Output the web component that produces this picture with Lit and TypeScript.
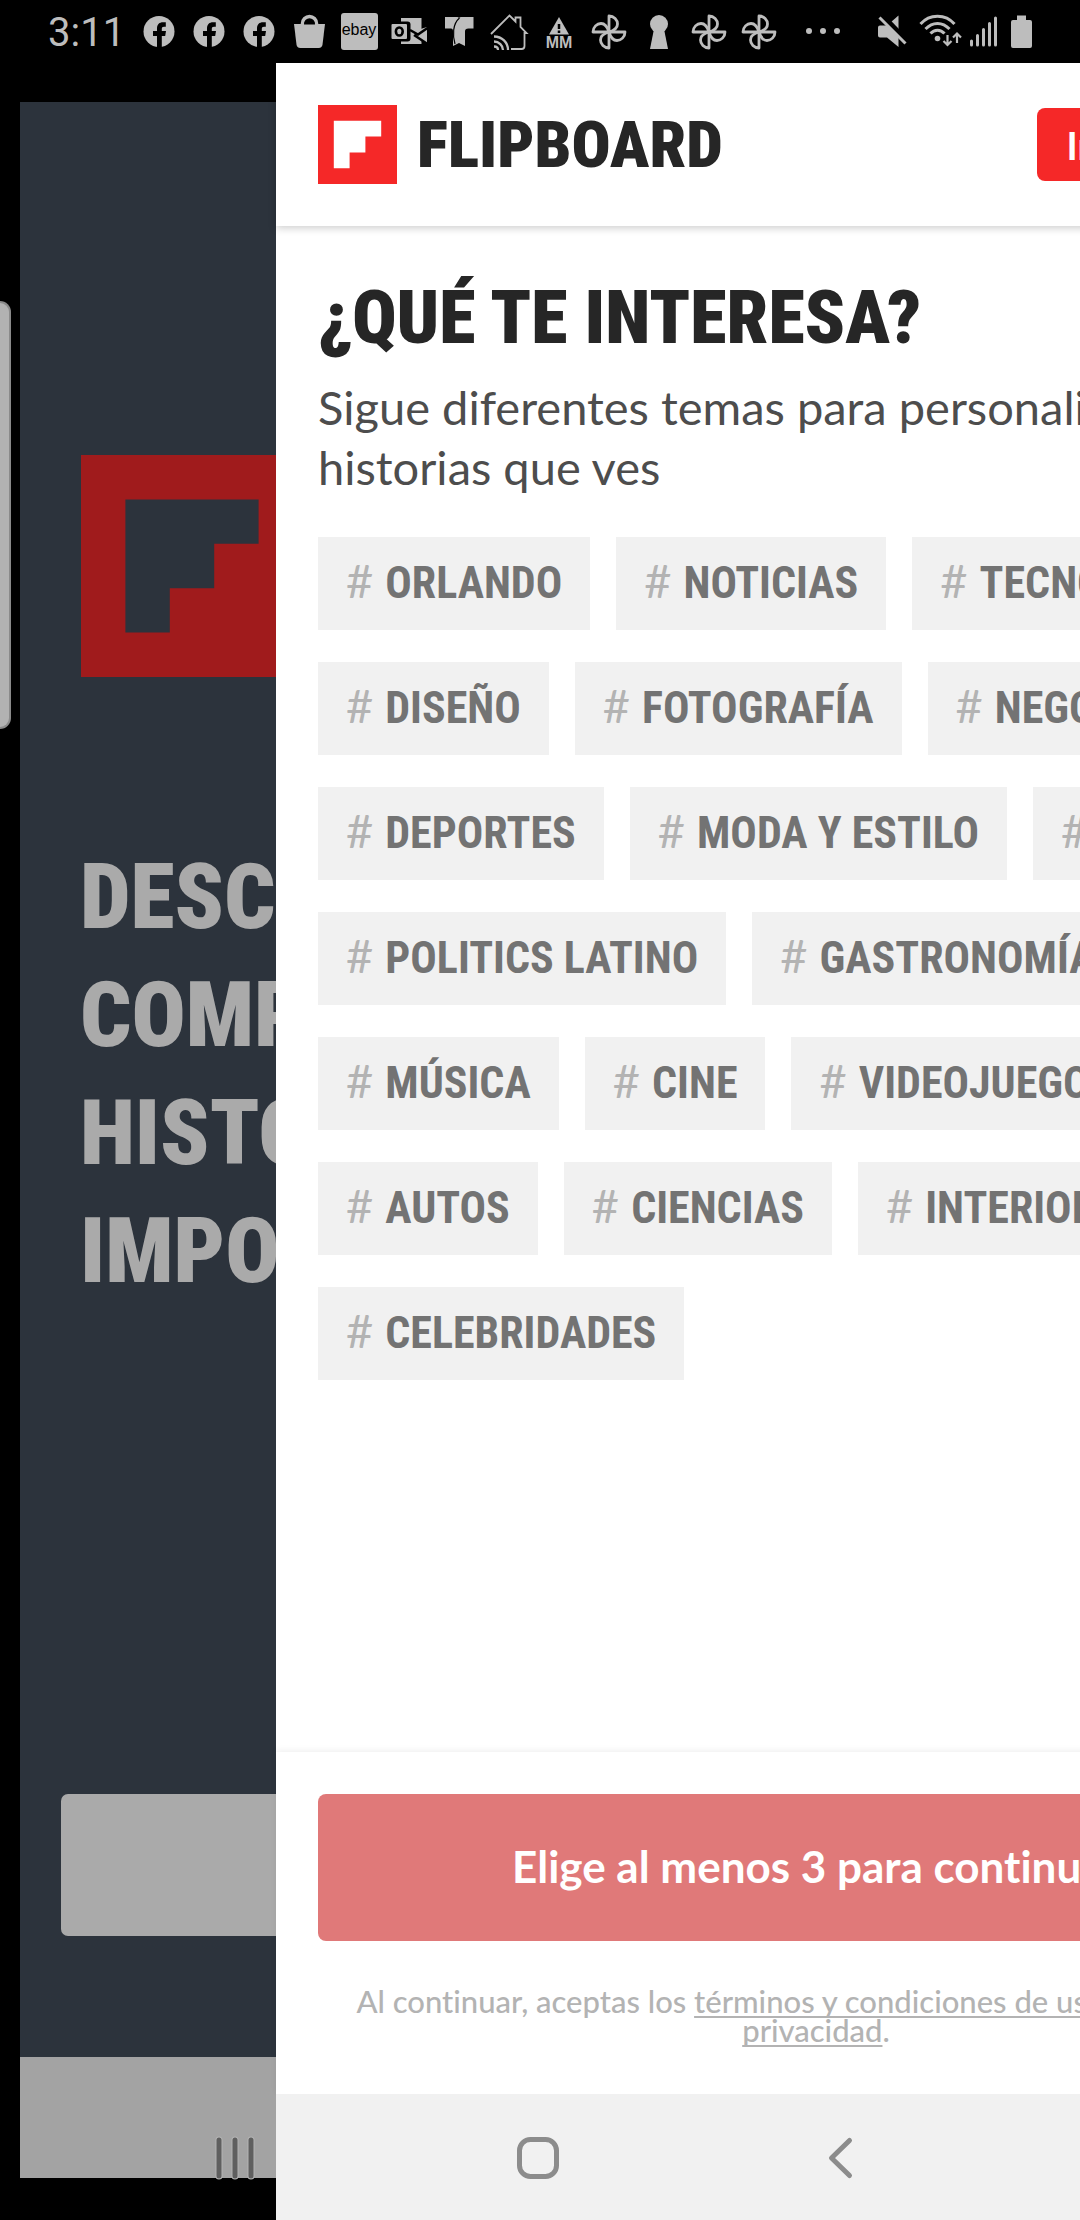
import { LitElement, html, css, svg } from "lit";
import { customElement, state } from "lit/decorators.js";
import { classMap } from "lit/directives/class-map.js";

const TOPICS = [
  "ORLANDO",
  "NOTICIAS",
  "TECNOLOGÍA",
  "DISEÑO",
  "FOTOGRAFÍA",
  "NEGOCIOS",
  "DEPORTES",
  "MODA Y ESTILO",
  "VIAJES",
  "POLITICS LATINO",
  "GASTRONOMÍA",
  "MÚSICA",
  "CINE",
  "VIDEOJUEGOS",
  "AUTOS",
  "CIENCIAS",
  "INTERIORES",
  "CELEBRIDADES",
];

const facebook = svg`
  <circle cx="25" cy="31.5" r="15.500" fill="currentColor" />
  <path d="M23 48V36h-4v-5h4v-2.500c0-4.300 2.500-6.300 6-6.300h2.800v4.500H30c-1.600 0-2.200.8-2.200 2.200V31h4.200l-.8 5h-3.400v12z" fill="#000" />`;

const bag = svg`
  <path d="M10 24h31l-2.500 20.500c-.3 2.300-1.500 3.500-3.800 3.500H16.300c-2.300 0-3.500-1.200-3.800-3.500z" fill="currentColor" />
  <path d="M18.500 26v-2.500a7 7 0 0 1 14 0V26" fill="none" stroke="currentColor" stroke-width="3.500" />
  <path d="M20 24.500a5.500 5.500 0 0 1 11 0z" fill="#000" />`;

const outlook = svg`
  <path d="M17 18h20.500v26H17z" fill="currentColor" />
  <path d="M43 27v16.500L24 33z" fill="currentColor" />
  <path d="M26 30l8 4.500 9.500-6.500M30 35l13.500 9" fill="none" stroke="#000" stroke-width="2.500" />
  <rect x="6" y="21.500" width="20.500" height="20" rx="3" fill="#000" />
  <rect x="7.500" y="24" width="15.500" height="15" rx="1" fill="currentColor" />
  <ellipse cx="15.300" cy="31.500" rx="3.400" ry="4" fill="none" stroke="#000" stroke-width="2.600" />`;

const telemundo = svg`
  <path d="M11 17h11.500c1.500 0 2.100.3 2.500 1 .4-.7 1.500-1 3-1h11.500v11.500h-5c-2.500 0-3.500 1-3.500 3V46l-6-3-6 3V31c0-1.500-.5-2.500-2-2.500h-6z" fill="currentColor" />
  <path d="M25.500 18c-7 6-7 17-4.500 26" fill="none" stroke="#000" stroke-width="1.200" />`;

const house = svg`
  <g fill="none" stroke="currentColor" stroke-width="1.800">
    <path d="M7 34L25.500 15.500 31.500 21.500V17.500H36.500V27L42.500 33H40.500V46c0 2-1 3-3 3H27" />
    <path d="M10 36.500c8 0 14 6 14 13.500M10 41.500c5 0 9 4 9 8.500M10 46.500c2.500 0 4 1.500 4 3.500" stroke-width="2.300" />
  </g>`;

const alert = svg`
  <path d="M25 17l10 17.500H15z" fill="currentColor" />
  <path d="M25 24v5M25 30.500v2.500" stroke="#000" stroke-width="2.500" />`;

const BLADE = "M25 32V16c5 0 8.500 4 8.500 8 0 3.500-3.500 6.500-8.500 8z";

const fan = svg`
  <g fill="none" stroke="currentColor" stroke-width="2.800" stroke-linejoin="round">
    <path d=${BLADE} />
    <path d=${BLADE} transform="rotate(90 25 32)" />
    <path d=${BLADE} transform="rotate(180 25 32)" />
    <path d=${BLADE} transform="rotate(270 25 32)" />
  </g>`;

const keyhole = svg`
  <circle cx="25" cy="24" r="9" fill="currentColor" />
  <path d="M20 29h10l4 20H16z" fill="currentColor" />`;

const cell = (art: unknown) =>
  html`<svg class="cell" viewBox="0 0 50 63" aria-hidden="true">${art}</svg>`;

@customElement("status-bar")
export class StatusBar extends LitElement {
  static styles = css`
    :host {
      display: flex;
      height: 63px;
      padding: 0 46px 0 48px;
      box-sizing: border-box;
      background: #000;
      color: #bdbdbd;
      font-family: Roboto, sans-serif;
      overflow: hidden;
    }
    .time {
      flex: none;
      width: 86px;
      font-size: 40px;
      line-height: 66px;
    }
    .cell {
      flex: none;
      width: 50px;
      height: 63px;
    }
    .labelled {
      display: grid;
      flex: none;
      width: 50px;
    }
    .labelled > * {
      grid-area: 1 / 1;
    }
    .tile {
      align-self: start;
      justify-self: center;
      margin-top: 13px;
      width: 37px;
      height: 37px;
      border-radius: 3px;
      background: #bdbdbd;
      color: #000;
      font: 16px/34px "Liberation Sans", sans-serif;
      text-align: center;
    }
    .mm {
      align-self: start;
      justify-self: center;
      margin-top: 35px;
      font: bold 16px/16px "Liberation Sans", sans-serif;
    }
    .dots {
      flex: none;
      width: 78px;
      height: 63px;
    }
    .system {
      flex: none;
      margin-left: auto;
      width: 158px;
      height: 63px;
    }
  `;

  render() {
    return html`
      <span class="time">3:11</span>
      ${cell(facebook)}${cell(facebook)}${cell(facebook)}${cell(bag)}
      <span class="labelled"><span class="tile">ebay</span></span>
      ${cell(outlook)}${cell(telemundo)}${cell(house)}
      <span class="labelled">${cell(alert)}<span class="mm">MM</span></span>
      ${cell(fan)}${cell(keyhole)}${cell(fan)}${cell(fan)}
      <svg class="dots" viewBox="0 0 78 63" aria-hidden="true" fill="currentColor">
        <circle cx="25" cy="31" r="3" />
        <circle cx="39" cy="31" r="3" />
        <circle cx="53" cy="31" r="3" />
      </svg>
      <svg class="system" viewBox="876 0 158 63" aria-hidden="true" fill="currentColor">
        <path d="M880 25.500h7l11.500-10V47l-11.500-9.500h-7q-2 0-2-2v-8q0-2 2-2z" />
        <path d="M881 14l27 28" stroke="#000" stroke-width="5" />
        <path d="M879.500 17.500l26 26" fill="none" stroke="currentColor" stroke-width="3" />
        <g fill="none" stroke="currentColor" stroke-width="3">
          <path d="M920.500 24c9-10.500 25-10.500 34 0" />
          <path d="M925.500 29c7-7.500 17-7.500 24 0" />
          <path d="M930.500 33.500c4-4.500 10-4.500 14 0" />
        </g>
        <circle cx="937.500" cy="38.500" r="2.800" />
        <path d="M947.500 35v9M943.500 41l4 4 4-4M957 43v-9M953 37.500l4-4 4 4" fill="none" stroke="currentColor" stroke-width="2.200" />
        <path d="M971.500 41v4M977.500 35.500v9.500M983.500 29.500v15.500M989.500 23.500v21.500M995.500 18v27" stroke="currentColor" stroke-width="3" stroke-linecap="round" />
        <path d="M1017 15.500h9v4.500h4q2 0 2 2v24q0 2-2 2h-17q-2 0-2-2v-24q0-2 2-2h4z" />
      </svg>
    `;
  }
}

@customElement("flip-mark")
export class FlipMark extends LitElement {
  static styles = css`
    :host {
      display: block;
    }
    .mark {
      display: block;
      width: 100%;
      fill: currentColor;
    }
  `;

  render() {
    return html`<svg class="mark" viewBox="0 0 5 5" aria-hidden="true">
      <path fill-rule="evenodd" d="M0 0h5v5H0zM1 1v3h1V3h1V2h1V1z" />
    </svg>`;
  }
}

@customElement("welcome-page")
export class WelcomePage extends LitElement {
  static styles = css`
    :host {
      display: flex;
      flex-direction: column;
      background: #2c333c;
      color: #aaa;
      padding-top: 353px;
      overflow: hidden;
    }
    .mark {
      width: 222px;
      margin-left: 61px;
      color: #a01b1c;
    }
    .title {
      margin: 162px 0 0 60px;
      font: 900 90px/118px "Roboto Condensed", sans-serif;
    }
    .line {
      display: block;
      white-space: nowrap;
    }
    .start {
      flex: none;
      height: 142px;
      margin: auto 41px 121px;
      border: 0;
      border-radius: 7px;
      background: #aaa;
    }
    .strip {
      flex: none;
      height: 121px;
      background: #a3a3a3;
    }
  `;

  render() {
    return html`
      <flip-mark class="mark"></flip-mark>
      <h1 class="title">
        <span class="line">DESCUBRE Y</span>
        <span class="line">COMPARTE</span>
        <span class="line">HISTORIAS</span>
        <span class="line">IMPORTANTES</span>
      </h1>
      <button class="start" type="button"></button>
      <div class="strip"></div>
    `;
  }
}

@customElement("topic-sheet")
export class TopicSheet extends LitElement {
  static styles = css`
    :host {
      display: flex;
      flex-direction: column;
      background: #fff;
      font-family: Lato, sans-serif;
      font-variant-ligatures: none;
    }
    .bar {
      display: flex;
      align-items: center;
      flex: none;
      height: 163px;
      padding: 0 42px;
      box-sizing: border-box;
      box-shadow: 0 2px 8px rgba(0, 0, 0, 0.2);
    }
    .mark {
      width: 79px;
      color: #f52828;
    }
    .brand {
      margin-left: 20px;
      color: #262626;
      font: 900 65px/72px "Roboto Condensed", sans-serif;
    }
    .login {
      margin-left: auto;
      height: 73px;
      padding: 0 29px;
      border: 0;
      border-radius: 8px;
      background: #f52828;
      color: #fff;
      font: bold 38px/72px Lato, sans-serif;
      white-space: nowrap;
    }
    .body {
      flex: 1;
      padding: 52px 42px 42px;
    }
    .heading {
      margin: 0;
      color: #262626;
      font: 900 74px/80px "Roboto Condensed", sans-serif;
    }
    .lead {
      margin: 19px 0 40px;
      color: #4d4d4d;
      font-size: 47px;
      line-height: 60px;
    }
    .topics {
      display: flex;
      flex-wrap: wrap;
      gap: 32px 26px;
    }
    .topic {
      display: flex;
      align-items: baseline;
      gap: 12px;
      height: 93px;
      padding: 13px 28px 17px;
      box-sizing: border-box;
      border: 0;
      background: #f1f1f1;
      color: #737373;
      font: bold 44px/60px "Roboto Condensed", sans-serif;
      white-space: nowrap;
    }
    .hash {
      color: #b3b3b3;
      font-family: Lato, sans-serif;
      font-size: 47px;
      font-weight: 400;
    }
    .topic.chosen {
      background: #f52828;
      color: #fff;
    }
    .foot {
      flex: none;
      padding: 42px 42px 49px;
      box-shadow: 0 -2px 6px rgba(0, 0, 0, 0.06);
    }
    .next {
      display: block;
      width: 100%;
      height: 147px;
      padding: 0 0 3px;
      border: 0;
      border-radius: 8px;
      background: #f52828;
      color: #fff;
      font: bold 44px/60px Lato, sans-serif;
    }
    .next:disabled {
      background: #e07979;
    }
    .login,
    .next,
    .topic {
      font-variant-ligatures: none;
    }
    .legal {
      margin: 46px 0 0;
      color: #b3b3b3;
      font-size: 31px;
      font-weight: 500;
      line-height: 29px;
      text-align: center;
    }
    .link {
      color: inherit;
      text-decoration-thickness: 2px;
      text-underline-offset: 3px;
      text-decoration-skip-ink: none;
    }
    .strip {
      flex: none;
      height: 126px;
      background: #f1f1f1;
    }
  `;

  @state() private chosen: string[] = [];

  private toggle(name: string) {
    this.chosen = this.chosen.includes(name)
      ? this.chosen.filter((item) => item !== name)
      : [...this.chosen, name];
  }

  render() {
    return html`
      <header class="bar">
        <flip-mark class="mark"></flip-mark>
        <span class="brand">FLIPBOARD</span>
        <button class="login" type="button">Iniciar sesión</button>
      </header>
      <section class="body">
        <h2 class="heading">¿QUÉ TE INTERESA?</h2>
        <p class="lead">Sigue diferentes temas para personalizar las historias que ves</p>
        <div class="topics">
          ${TOPICS.map((name) => {
            const on = this.chosen.includes(name);
            return html`<button
              class=${classMap({ topic: true, chosen: on })}
              type="button"
              aria-pressed=${on ? "true" : "false"}
              @click=${() => this.toggle(name)}
            ><span class="hash">#</span><span>${name}</span></button>`;
          })}
        </div>
      </section>
      <footer class="foot">
        <button class="next" type="button" ?disabled=${this.chosen.length < 3}>
          Elige al menos 3 para continuar
        </button>
        <p class="legal">
          Al continuar, aceptas los
          <a class="link" href="#terminos">términos y condiciones de uso</a> y
          <a class="link" href="#privacidad">política de privacidad</a>.
        </p>
      </footer>
      <div class="strip"></div>
    `;
  }
}

@customElement("system-nav")
export class SystemNav extends LitElement {
  static styles = css`
    :host {
      display: grid;
      grid-template-columns: repeat(3, 1fr);
      height: 126px;
      padding: 0 90px 0 84px;
      box-sizing: border-box;
    }
    .key {
      display: grid;
      place-items: center;
      padding: 0;
      border: 0;
      background: none;
      color: #8c8c8c;
    }
    .glyph {
      width: 48px;
      height: 48px;
      fill: none;
      stroke: currentColor;
      stroke-width: 5;
      stroke-linecap: round;
      stroke-linejoin: round;
    }
    .halo {
      stroke: #b4b4b4;
      stroke-width: 7;
    }
    .dark {
      color: #5f5f5f;
    }
  `;

  render() {
    return html`
      <button class="key dark" type="button" aria-label="Recientes">
        <svg class="glyph" viewBox="0 0 48 48">
          <path class="halo" d="M8 7v36M24 7v36M40 7v36" />
          <path d="M8 7v36M24 7v36M40 7v36" />
        </svg>
      </button>
      <button class="key" type="button" aria-label="Inicio">
        <svg class="glyph" viewBox="0 0 48 48">
          <rect x="6.500" y="6.500" width="37" height="37" rx="11" />
        </svg>
      </button>
      <button class="key" type="button" aria-label="Atrás">
        <svg class="glyph" viewBox="0 0 48 48">
          <path d="M34.500 7.500L16.500 25l18 17.500" />
        </svg>
      </button>
    `;
  }
}

@customElement("app-root")
export class AppRoot extends LitElement {
  static styles = css`
    :host {
      display: grid;
      grid-template-rows: auto 1fr;
      min-height: 100vh;
      background: #000;
      overflow: hidden;
    }
    .stage {
      display: grid;
      grid-template-columns: minmax(0, 1fr);
      overflow: hidden;
    }
    .stage > * {
      grid-area: 1 / 1;
    }
    .welcome {
      margin: 39px 0 42px 20px;
    }
    .handle {
      width: 11px;
      height: 428px;
      margin-top: 238px;
      box-sizing: border-box;
      border: 2px solid #8a8a8a;
      border-left: 0;
      border-radius: 0 14px 14px 0;
      background: #b2b2b2;
    }
    .sheet {
      width: 100%;
      margin-left: 276px;
    }
    .nav {
      align-self: end;
    }
  `;

  render() {
    return html`
      <status-bar></status-bar>
      <main class="stage">
        <welcome-page class="welcome"></welcome-page>
        <div class="handle"></div>
        <topic-sheet class="sheet"></topic-sheet>
        <system-nav class="nav"></system-nav>
      </main>
    `;
  }
}
